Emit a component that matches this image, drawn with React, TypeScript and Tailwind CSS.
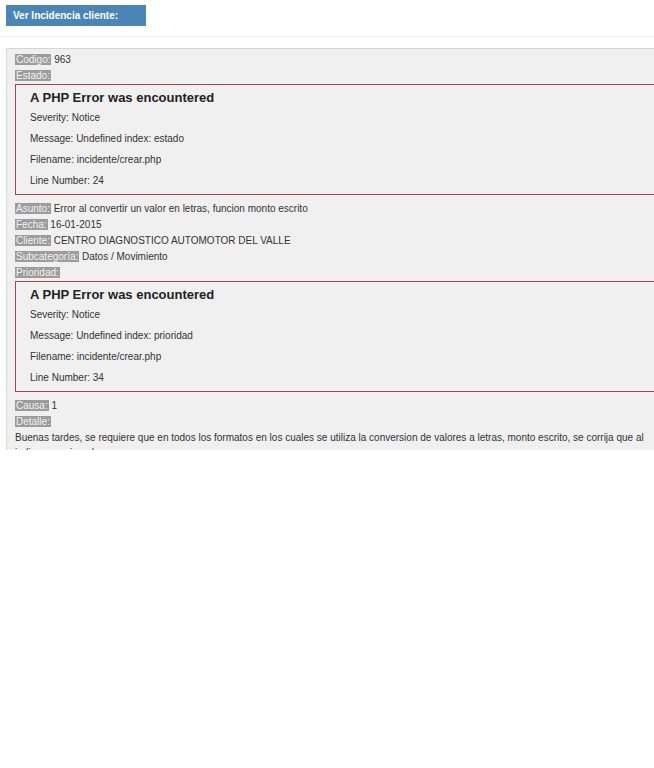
const labelCls = "bg-[#9c9c9c] text-[#f2f2f2] px-px";

function Field({ label, value }: { label: string; value?: string }) {
  return (
    <div className="leading-[16px] whitespace-nowrap">
      <span className={labelCls}>{label}</span>
      {value !== undefined && <span> {value}</span>}
    </div>
  );
}

function PhpError({ message, line }: { message: string; line: number }) {
  return (
    <div className="mb-[6px] border border-[#a4474b] pl-[14px] pt-[5px] pb-[5px] text-[#333]">
      <h4 className="text-[13px] font-bold leading-[16px] text-[#222]">A PHP Error was encountered</h4>
      <p className="mt-[4px] leading-[16px]">Severity: Notice</p>
      <p className="mt-[5px] leading-[16px]">Message: Undefined index: {message}</p>
      <p className="mt-[5px] leading-[16px]">Filename: incidente/crear.php</p>
      <p className="mt-[5px] leading-[16px]">Line Number: {line}</p>
    </div>
  );
}

export default function App() {
  return (
    <div
      className="h-[768px] w-[654px] overflow-hidden bg-white text-[10px] text-[#333]"
      style={{ fontFamily: '"Liberation Sans", Arial, sans-serif' }}
    >
      <div className="border-b border-[#ececec] pb-[10px] pt-[5px] pl-[6px]">
        <div className="flex h-[21px] w-[140px] items-center bg-[#4a85b5] pl-[7px] text-[10px] font-bold text-white">
          Ver Incidencia cliente:
        </div>
      </div>

      <div className="ml-[6px] mt-[11px] h-[402px] w-[700px] overflow-hidden border-l border-t border-[#d6d6d6] bg-[#f0f0f0] pl-[8px] pt-[3px]">
        <Field label="Codigo:" value="963" />
        <Field label="Estado:" />
        <PhpError message="estado" line={24} />
        <Field label="Asunto:" value="Error al convertir un valor en letras, funcion monto escrito" />
        <Field label="Fecha:" value="16-01-2015" />
        <Field label="Cliente:" value="CENTRO DIAGNOSTICO AUTOMOTOR DEL VALLE" />
        <Field label="Subcategoría:" value="Datos / Movimiento" />
        <Field label="Prioridad:" />
        <PhpError message="prioridad" line={34} />
        <Field label="Causa:" value="1" />
        <Field label="Detalle:" />
        <p className="w-[652px] leading-[15px]">
          Buenas tardes, se requiere que en todos los formatos en los cuales se utiliza la conversion de valores a letras, monto escrito, se corrija que al indicar por ejemplo
        </p>
      </div>
    </div>
  );
}
